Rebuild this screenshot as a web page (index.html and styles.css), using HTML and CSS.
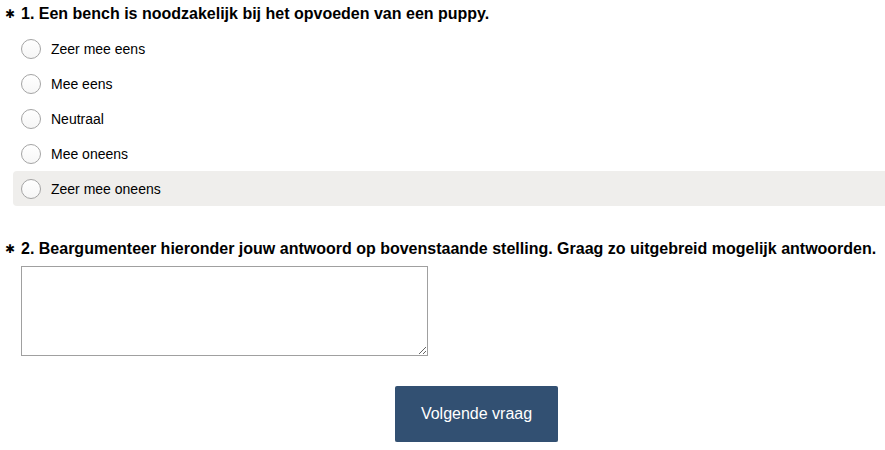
FILE: index.html
```html
<!DOCTYPE html>
<html lang="nl">
<head>
    <meta charset="UTF-8">
    <meta name="viewport" content="width=device-width, initial-scale=1.0">
    <title>Vragenlijst</title>
    <link rel="stylesheet" href="styles.css">
</head>
<body>

<form class="survey" onsubmit="return false">
    <div class="question">
        <h2 class="question-title"><span class="required">&#10033;</span>1. Een bench is noodzakelijk bij het opvoeden van een puppy.</h2>
        <div class="options">
            <label class="option"><input type="radio" name="q1"><span>Zeer mee eens</span></label>
            <label class="option"><input type="radio" name="q1"><span>Mee eens</span></label>
            <label class="option"><input type="radio" name="q1"><span>Neutraal</span></label>
            <label class="option"><input type="radio" name="q1"><span>Mee oneens</span></label>
            <label class="option hover"><input type="radio" name="q1"><span>Zeer mee oneens</span></label>
        </div>
    </div>

    <div class="question second">
        <h2 class="question-title"><span class="required">&#10033;</span>2. Beargumenteer hieronder jouw antwoord op bovenstaande stelling. Graag zo uitgebreid mogelijk antwoorden.</h2>
        <textarea class="answer"></textarea>
    </div>

    <div class="actions">
        <button type="submit" class="next-btn">Volgende vraag</button>
    </div>
</form>

</body>
</html>
```

FILE: styles.css
```css
body {
    font-family: 'Liberation Sans', Arial, sans-serif;
    background: #fff;
    color: #000;
    margin: 0;
    overflow: hidden;
}
.survey {
    padding-top: 4px;
}
.question-title {
    display: flex;
    margin: 0;
    padding-left: 5px;
    font-size: 16px;
    line-height: 20px;
    font-weight: bold;
    color: #000;
}
.question-title .required {
    width: 16px;
    flex-shrink: 0;
    font-family: 'DejaVu Sans', sans-serif;
    font-size: 12px;
    font-weight: normal;
}
.options {
    margin-top: 7px;
    margin-left: 13px;
}
.option {
    display: flex;
    align-items: center;
    height: 35px;
    padding-left: 8px;
    font-size: 14px;
    color: #000;
    border-radius: 4px 0 0 4px;
}
.option.hover {
    background: #efeeec;
}
.option input[type="radio"] {
    appearance: none;
    -webkit-appearance: none;
    width: 20px;
    height: 20px;
    margin: 0 10px 0 0;
    border: 1px solid #a4a4a4;
    border-radius: 50%;
    background: linear-gradient(#fff, #f6f6f6);
    box-sizing: border-box;
}
.second {
    margin-top: 33px;
}
.answer {
    display: block;
    width: 407px;
    height: 90px;
    margin: 7px 0 0 21px;
    border: 1px solid #a0a0a0;
    box-sizing: border-box;
    font-family: inherit;
    font-size: 14px;
}
.actions {
    display: flex;
    justify-content: center;
    margin-top: 30px;
    padding-left: 68px;
}
.next-btn {
    width: 163px;
    height: 56px;
    background: #325072;
    color: #fff;
    border: none;
    border-radius: 2px;
    box-shadow: 0 1px 0 #dcdcdc;
    font-family: inherit;
    font-size: 16px;
    cursor: pointer;
}
```
